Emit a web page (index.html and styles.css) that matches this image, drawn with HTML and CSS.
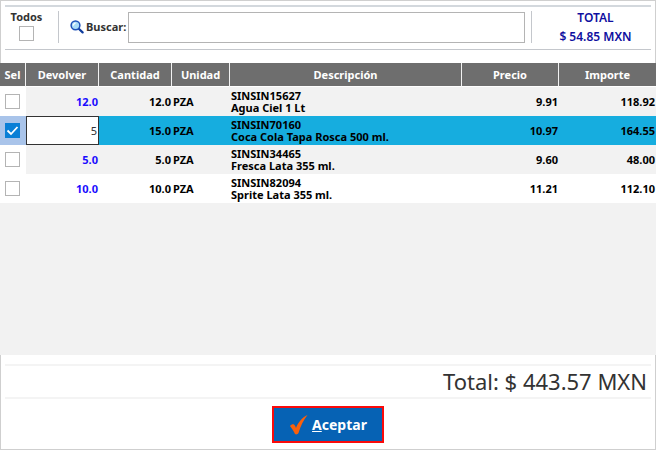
FILE: index.html
```
<!DOCTYPE html>
<html lang="es">
<head>
  <meta charset="utf-8">
  <title>Devolver productos</title>
  <link rel="stylesheet" href="styles.css">
</head>

<body>

  <div class="window">

    <div class="toolbar">
      <div class="all">
        <label for="todos">Todos</label>
        <input type="checkbox" id="todos">
      </div>
      <div class="search">
        <svg class="searchIcon" width="14" height="14" viewBox="0 0 14 14">
          <path d="M8.5 8.5 L12.6 12.4" stroke="#0f3c9c" stroke-width="2.2" stroke-linecap="round"/>
          <circle cx="5.5" cy="5.3" r="4.4" fill="#a9dcf7" stroke="#1d50b8" stroke-width="1.5"/>
          <path d="M3.4 5.6 A2.3 2.3 0 0 1 5.6 3.2" fill="none" stroke="#fff" stroke-width="1.3"/>
        </svg>
        <label for="buscar">Buscar:</label>
        <input type="text" id="buscar">
      </div>
      <div class="summary">
        <div>TOTAL</div>
        <div>$ 54.85 MXN</div>
      </div>
    </div>

    <div class="items">
      <table>
        <colgroup>
          <col class="colSel">
          <col class="colReturn">
          <col class="colQty">
          <col class="colUnit">
          <col>
          <col class="colPrice">
          <col class="colAmount">
        </colgroup>
        <thead>
          <tr>
            <th>Sel</th>
            <th>Devolver</th>
            <th>Cantidad</th>
            <th>Unidad</th>
            <th>Descripción</th>
            <th>Precio</th>
            <th>Importe</th>
          </tr>
        </thead>
        <tbody>
          <tr>
            <td class="sel"><input type="checkbox" aria-label="SINSIN15627"></td>
            <td class="num return">12.0</td>
            <td class="num">12.0</td>
            <td>PZA</td>
            <td>SINSIN15627<br>Agua Ciel 1 Lt</td>
            <td class="num">9.91</td>
            <td class="num">118.92</td>
          </tr>
          <tr class="selected">
            <td class="sel"><input type="checkbox" aria-label="SINSIN70160" checked></td>
            <td class="edit"><input type="text" aria-label="Devolver" value="5"></td>
            <td class="num">15.0</td>
            <td>PZA</td>
            <td>SINSIN70160<br>Coca Cola Tapa Rosca 500 ml.</td>
            <td class="num">10.97</td>
            <td class="num">164.55</td>
          </tr>
          <tr>
            <td class="sel"><input type="checkbox" aria-label="SINSIN34465"></td>
            <td class="num return">5.0</td>
            <td class="num">5.0</td>
            <td>PZA</td>
            <td>SINSIN34465<br>Fresca Lata 355 ml.</td>
            <td class="num">9.60</td>
            <td class="num">48.00</td>
          </tr>
          <tr>
            <td class="sel"><input type="checkbox" aria-label="SINSIN82094"></td>
            <td class="num return">10.0</td>
            <td class="num">10.0</td>
            <td>PZA</td>
            <td>SINSIN82094<br>Sprite Lata 355 ml.</td>
            <td class="num">11.21</td>
            <td class="num">112.10</td>
          </tr>
        </tbody>
      </table>
    </div>

    <div class="total">Total: $ 443.57 MXN</div>

    <div class="actions">
      <button type="button" class="accept" accesskey="a">
        <svg width="20" height="22" viewBox="0 0 20 22">
          <path d="M1 12 C2 10.5 4 9.8 5 10.5 C6 11.3 6.6 12.8 7 14 C9 8.500 13 3.500 18.500 1 C14.500 6 11.500 12 9.500 19 C8.500 20.500 7 20.800 6 20 C4.500 17 3 14.500 1 12 Z" fill="#f9600c"/>
        </svg>
        <span><u>A</u>ceptar</span>
      </button>
    </div>

  </div>

</body>
</html>
```
FILE: styles.css
```
* {
  box-sizing: border-box;
}

body {
  margin: 0;
  font-family: "Noto Sans", "Open Sans", sans-serif;
  font-size: 11px;
  font-weight: bold;
  line-height: 12px;
  color: #000;
}

.window {
  display: flex;
  flex-direction: column;
  min-height: 100vh;
  border: 1px solid #cfcfcf;
  background: #fff;
}

input[type=checkbox] {
  appearance: none;
  display: block;
  width: 15px;
  height: 15px;
  margin: 0;
  border: 1px solid #b4b4b4;
  background: #fff;
}

input[type=checkbox]:checked {
  border-color: #0a7fd6;
  background: #0a7fd6 url("data:image/svg+xml,%3Csvg xmlns='http://www.w3.org/2000/svg' viewBox='0 0 13 13'%3E%3Cpath d='M1.500 6.500 L5 10 L11.500 3' fill='none' stroke='white' stroke-width='1.800'/%3E%3C/svg%3E") center / 13px 13px no-repeat;
}

/* top bar */

.toolbar {
  display: flex;
  margin: 4px 4px 13px;
  padding: 4px 0 6px;
  border-top: 2px solid #d3d8dd;
  border-bottom: 1px solid #c4c7cc;
  color: #333;
}

.all {
  display: flex;
  flex-direction: column;
  align-items: center;
  gap: 3px;
  width: 54px;
  padding-right: 10px;
  border-right: 1px solid #c4c7cc;
}

.search {
  display: flex;
  flex: 1;
  align-items: center;
  gap: 2px;
  padding: 0 6px 0 11px;
}

#buscar {
  flex: 1;
  min-width: 0;
  height: 31px;
  padding: 0 4px;
  border: 1px solid #b4b4b4;
  font: inherit;
}

.summary {
  display: flex;
  flex-direction: column;
  justify-content: center;
  width: 120px;
  height: 32px;
  padding-left: 8px;
  border-left: 1px solid #c4c7cc;
  font-size: 12px;
  line-height: 19px;
  font-weight: 600;
  text-align: center;
  color: #0f0fa0;
}

/* product list */

.items {
  flex: 1;
  margin: 0 -1px;
  background: #f2f2f2;
}

table {
  width: 100%;
  table-layout: fixed;
  border-collapse: separate;
  border-spacing: 0;
}

.colSel {
  width: 26px;
}

.colReturn {
  width: 73px;
}

.colQty {
  width: 73px;
}

.colUnit {
  width: 58px;
}

.colPrice {
  width: 97px;
}

.colAmount {
  width: 97px;
}

th {
  height: 24px;
  padding: 0;
  border-right: 1px solid #f2f2f2;
  border-bottom: 1px solid #fff;
  background: #6e6e6e;
  color: #fff;
}

th:last-child {
  border-right: none;
}

td {
  height: 29px;
  padding: 0 1px;
  background: #f2f2f2;
}

tr:nth-child(even) td {
  background: #fff;
}

.num {
  text-align: right;
}

.return {
  color: #1a0cff;
}

td.sel,
tr:nth-child(even) td.sel {
  padding: 0 5px;
  background: #fff;
}

tbody tr.selected td {
  background: #16addf;
}

tbody tr.selected td.sel {
  background: #a9c4ea;
}

td.edit {
  padding: 0;
}

.edit input {
  display: block;
  width: 100%;
  height: 29px;
  margin: 0;
  padding: 0 1px;
  border: 1px solid #333;
  border-radius: 0;
  font: inherit;
  font-weight: normal;
  text-align: right;
  color: #333;
}

/* bottom part */

.total {
  margin: 9px 4px 0;
  padding: 3px 4px 4px;
  border-top: 2px solid #f4f4f4;
  border-bottom: 2px solid #f4f4f4;
  font-size: 22px;
  font-weight: normal;
  line-height: 24px;
  text-align: right;
  color: #333;
}

.actions {
  display: flex;
  justify-content: center;
  padding: 7px 0 6px;
}

.accept {
  display: flex;
  align-items: center;
  justify-content: center;
  gap: 3px;
  width: 112px;
  height: 37px;
  padding: 0;
  border: 2px solid #fa0a0a;
  background: #0662b4;
  color: #fff;
  font: inherit;
  font-size: 14px;
  line-height: 18px;
}
```
